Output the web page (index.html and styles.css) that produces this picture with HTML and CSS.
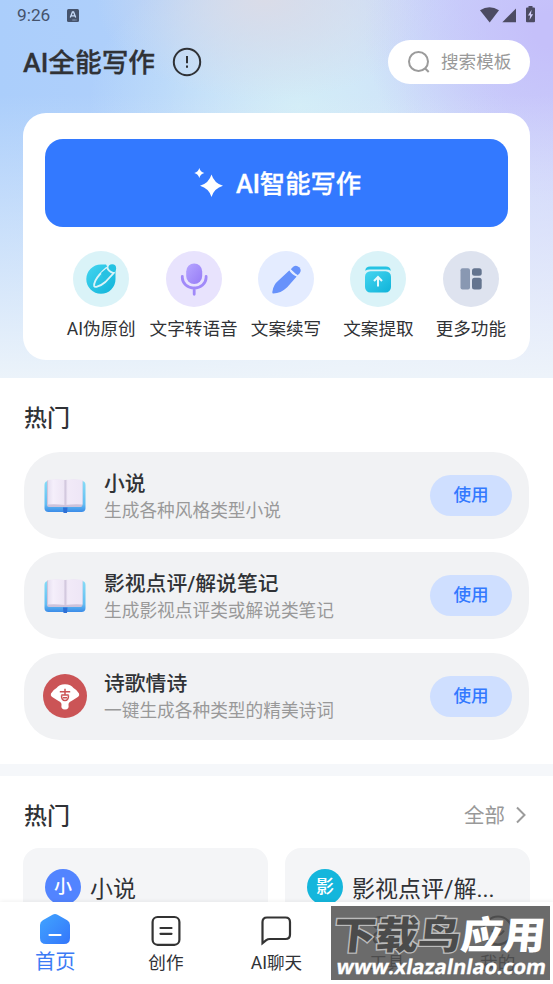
FILE: index.html
```html
<!DOCTYPE html>
<html lang="zh-CN">

<head>
  <meta charset="utf-8">
  <meta name="viewport" content="width=device-width, initial-scale=1">
  <title>AI全能写作</title>
  <link rel="stylesheet" href="styles.css">
</head>

<body>
  <div class="page">
    <div class="hero">
      <div class="status-bar">
        <span class="time">9:26</span>
        <svg class="status-app" width="12" height="13" viewBox="0 0 12 13">
          <rect width="12" height="13" rx="1.5" fill="#45536c"/>
          <path d="M3.3 8.6L5.4 3h1.2l2.1 5.6M4.2 6.8h3.6" fill="none" stroke="#c7dbf8" stroke-width="1.3"/>
          <path d="M5.5 11h4" stroke="#c7dbf8" stroke-width=".8" stroke-dasharray="1.2 .6"/>
        </svg>
        <svg class="status-icons" width="56" height="18" viewBox="0 0 56 18">
          <g fill="#4c4b62">
            <path d="M0 4.2Q9.5-1.8 19 4.2L9.7 16.4z"/>
            <path d="M36 2.5v13.7H22.3z"/>
            <path d="M48.500 1.500v-1.500h4v1.500h1.500q1 0 1 1v12.700q0 1-1 1h-7q-1 0-1-1v-12.700q0-1 1-1z"/>
          </g>
          <path d="M51.600 3.700l-3.600 5.800h2.200l-.7 4.600 3.600-5.900h-2.200z" fill="#d3cffa"/>
        </svg>
      </div>
      <div class="header">
        <h1>AI全能写作</h1>
        <svg class="tip" width="30" height="30" viewBox="0 0 30 30" fill="none" stroke="#303236" stroke-width="2">
          <circle cx="15" cy="15" r="13.200"/>
          <path d="M15 9v7.300M15 18.400v2.300"/>
        </svg>
        <div class="search">
          <svg width="24" height="24" viewBox="0 0 24 24" fill="none" stroke="#9b9b9b" stroke-width="2">
            <circle cx="11.500" cy="11.500" r="9.500"/>
            <path d="M18 18.300l3.700 3.700"/>
          </svg>
          <span>搜索模板</span>
        </div>
      </div>
      <div class="card">
        <div class="main-btn">
          <svg width="30" height="32" viewBox="0 0 30 32" fill="#fff">
            <path d="M5.300 1q1 4 5 5-4 1-5 5-1-4-5-5 4-1 5-5z"/>
            <path d="M17.500 7.500q2.600 8.700 11.500 11.300-8.900 2.600-11.500 11.200-2.600-8.600-11.500-11.200 8.900-2.600 11.500-11.300z"/>
          </svg>
          <span>AI智能写作</span>
        </div>
        <ul class="tools">
          <li>
            <div class="tool-icon cyan">
              <svg width="56" height="56" viewBox="0 0 56 56">
                <defs>
                  <linearGradient id="cyan" x1="0" y1="0" x2="1" y2="1">
                    <stop offset="0" stop-color="#45d5f0"/>
                    <stop offset="1" stop-color="#0fb3d9"/>
                  </linearGradient>
                </defs>
                <path d="M28 13.500h10.500q4 0 4 4V28a14.600 14.600 0 1 1-14.500-14.500z" fill="url(#cyan)"/>
                <path d="M43.500 13H33l2 5 4 3z" fill="#daf3f8"/>
                <path d="M34 16.400q-8.800 7.300-11.600 13.200-1.700 3.700-1.200 5.500.5 1.100 2.200.7 4.600-1 8.600-4.600l9.500-10.200" fill="none" stroke="#daf3f8" stroke-width="1.900"/>
                <path d="M34 17l5.500 5-7.500 8-4-8z" fill="#27c1e2"/>
                <circle cx="39.200" cy="17.200" r="3.900" fill="#24c2e2"/>
                <path d="M33.800 16.200q1.800 4.400 6.600 6" fill="none" stroke="#daf3f8" stroke-width="1.800"/>
              </svg>
            </div>
            <p>AI伪原创</p>
          </li>
          <li>
            <div class="tool-icon purple">
              <svg width="56" height="56" viewBox="0 0 56 56">
                <defs>
                  <linearGradient id="violet" x1="0" y1="0" x2="1" y2="1">
                    <stop offset="0" stop-color="#b6a5ff"/>
                    <stop offset="1" stop-color="#967cf6"/>
                  </linearGradient>
                </defs>
                <rect x="20.200" y="12.500" width="16" height="20.500" rx="8" fill="url(#violet)"/>
                <path d="M16.300 25.500v1a11.900 10.600 0 0 0 23.800 0v-1M28.200 37v6.300" fill="none" stroke="#a18af9" stroke-width="2.800" stroke-linecap="round"/>
              </svg>
            </div>
            <p>文字转语音</p>
          </li>
          <li>
            <div class="tool-icon blue">
              <svg width="56" height="56" viewBox="0 0 56 56">
                <path d="M31.500 19.200l7.200 6.200-9.500 10.900q-6.500 6.200-13.900 6.200-1.200 0-1-1.600.8-7 6.700-11.800z" fill="#6792fb"/>
                <path d="M32.800 18.200l2.400-2.400q2.900-2.500 6 .4 2.800 3 .4 6l-2.100 2.300z" fill="#6792fb"/>
                <path d="M32 18.600q2 4.400 7.500 6.300" fill="none" stroke="#e4ecff" stroke-width="1.700"/>
              </svg>
            </div>
            <p>文案续写</p>
          </li>
          <li>
            <div class="tool-icon cyan">
              <svg width="56" height="56" viewBox="0 0 56 56">
                <path d="M15.200 19.700q.5-4.200 5-4.200h15.600q4.500 0 5 4.200-2-1.200-4.500-1.200H19.700q-2.500 0-4.500 1.200z" fill="#25c3e3"/>
                <rect x="15" y="20.200" width="26" height="21.300" rx="5.500" fill="url(#cyan)"/>
                <path d="M28 35.500v-9M24 30l4-4 4 4" fill="none" stroke="#e5fafd" stroke-width="2"/>
              </svg>
            </div>
            <p>文案提取</p>
          </li>
          <li>
            <div class="tool-icon gray">
              <svg width="56" height="56" viewBox="0 0 56 56">
                <rect x="17.500" y="17.300" width="9.500" height="21.300" rx="2" fill="#8998b2"/>
                <rect x="29" y="17.300" width="9.700" height="7.500" rx="2.500" fill="#64748f"/>
                <rect x="29" y="26.800" width="9.700" height="11.800" rx="2.500" fill="#64748f"/>
              </svg>
            </div>
            <p>更多功能</p>
          </li>
        </ul>
      </div>
    </div>

    <div class="hot">
      <h2>热门</h2>
      <ul class="hot-list">
        <li>
          <svg class="hot-icon" width="44" height="44" viewBox="0 0 44 44">
            <defs>
              <linearGradient id="cover" x1="0" y1="0" x2="0" y2="1">
                <stop offset="0" stop-color="#86dbf6"/>
                <stop offset=".75" stop-color="#62bdf3"/>
                <stop offset="1" stop-color="#3c8ce8"/>
              </linearGradient>
              <linearGradient id="paper" x1="0" y1="0" x2="1" y2="0">
                <stop offset="0" stop-color="#e6dff0"/>
                <stop offset=".15" stop-color="#f5effb"/>
                <stop offset=".45" stop-color="#eee6f5"/>
                <stop offset=".5" stop-color="#d0c5dc"/>
                <stop offset=".57" stop-color="#f2eaf8"/>
                <stop offset="1" stop-color="#eee6f6"/>
              </linearGradient>
            </defs>
            <rect x="1.500" y="7" width="41" height="31" rx="4" fill="url(#cover)"/>
            <path d="M4 6.500q9-1.500 18 0 9-1.500 17.500 0V31q0 2-2 2H6q-2 0-2-2z" fill="#cdc3db"/>
            <path d="M5 6q9-1.500 17 0 9-1.500 17.500 0v24.500q-9-.5-17.500.5-8.500-1-17-.5z" fill="url(#paper)"/>
            <path d="M20 33.500h4.500l-.5 5.500h-3.500z" fill="#2f70d5"/>
          </svg>
          <div class="hot-text">
            <h3>小说</h3>
            <p>生成各种风格类型小说</p>
          </div>
          <span class="use">使用</span>
        </li>
        <li>
          <svg class="hot-icon" width="44" height="44" viewBox="0 0 44 44">
            <rect x="1.500" y="7" width="41" height="31" rx="4" fill="url(#cover)"/>
            <path d="M4 6.500q9-1.500 18 0 9-1.500 17.500 0V31q0 2-2 2H6q-2 0-2-2z" fill="#cdc3db"/>
            <path d="M5 6q9-1.500 17 0 9-1.500 17.500 0v24.500q-9-.5-17.500.5-8.500-1-17-.5z" fill="url(#paper)"/>
            <path d="M20 33.500h4.500l-.5 5.500h-3.500z" fill="#2f70d5"/>
          </svg>
          <div class="hot-text">
            <h3>影视点评/解说笔记</h3>
            <p>生成影视点评类或解说类笔记</p>
          </div>
          <span class="use">使用</span>
        </li>
        <li>
          <svg class="hot-icon" width="44" height="44" viewBox="0 0 44 44">
            <circle cx="22" cy="22" r="22" fill="#cb5456"/>
            <path d="M8 19.500q1.800-3.500 5.500-5.500 2.500-3.800 8.500-3.800T30.500 14q3.700 2 5.500 5.500.8 1.800-.8 3.200L28.500 27q-3.300 1.500-3 3.700.9 4.800-3.500 4.800t-3.500-4.800q.3-2.200-3-3.700l-6.700-4.300q-1.600-1.400-.8-3.200z" fill="#fff"/>
            <path d="M16.800 17.700h10.400M22 14.800v6M18.300 21h7.400M18.500 21.500q0 5 3.500 5t3.500-5M20 23.700h4" fill="none" stroke="#cb5456" stroke-width="1.500"/>
          </svg>
          <div class="hot-text">
            <h3>诗歌情诗</h3>
            <p>一键生成各种类型的精美诗词</p>
          </div>
          <span class="use">使用</span>
        </li>
      </ul>
    </div>

    <div class="more">
      <div class="more-head">
        <h2>热门</h2>
        <span class="all">全部</span>
        <svg width="12" height="18" viewBox="0 0 12 18" fill="none" stroke="#9b9b9b" stroke-width="2">
          <path d="M2 1.500L9.500 9 2 16.500"/>
        </svg>
      </div>
      <div class="more-list">
        <div class="more-item"><i class="avatar">小</i><span>小说</span></div>
        <div class="more-item"><i class="avatar teal">影</i><span>影视点评/解...</span></div>
      </div>
    </div>

    <ul class="tab-bar">
      <li class="active">
        <svg width="32" height="32" viewBox="0 0 32 32">
          <defs>
            <linearGradient id="home" x1="0" y1="0" x2="1" y2="1">
              <stop offset="0" stop-color="#41a5ff"/>
              <stop offset="1" stop-color="#3476fb"/>
            </linearGradient>
          </defs>
          <path d="M13.500.8q2.500-1.400 5 0l9.700 5.400q2.800 1.600 2.800 4.800v13q0 6-6 6H7q-6 0-6-6V11q0-3.200 2.800-4.800z" fill="url(#home)"/>
          <path d="M10.500 21h11" stroke="#fff" stroke-width="2.200" stroke-linecap="round"/>
        </svg>
        <span>首页</span>
      </li>
      <li>
        <svg width="32" height="32" viewBox="0 0 32 32" fill="none" stroke="#333" stroke-width="2.200">
          <rect x="2.600" y="3" width="26.800" height="27.800" rx="5"/>
          <path d="M10.500 14h11M10.500 19.800h11" stroke-linecap="round"/>
        </svg>
        <span>创作</span>
      </li>
      <li>
        <svg width="32" height="32" viewBox="0 0 32 32" fill="none" stroke="#333" stroke-width="2.200">
          <path d="M2.500 29.200V8q0-4.500 4.500-4.500h18.500q4.500 0 4.500 4.500v12.500q0 4.500-4.500 4.500H9.800q-2 0-3.500 1.200z"/>
        </svg>
        <span>AI聊天</span>
      </li>
      <li>
        <svg width="32" height="32" viewBox="0 0 32 32" fill="none" stroke="#333" stroke-width="2.200">
          <circle cx="8.500" cy="9" r="5.800"/>
          <circle cx="23.500" cy="9" r="5.800"/>
          <circle cx="8.500" cy="24" r="5.800"/>
          <circle cx="23.500" cy="24" r="5.800"/>
        </svg>
        <span>工具</span>
      </li>
      <li>
        <svg width="32" height="32" viewBox="0 0 32 32" fill="none" stroke="#333" stroke-width="2.200">
          <circle cx="16" cy="16.500" r="14"/>
          <path d="M10 16.500q6 9 12 0"/>
        </svg>
        <span>我的</span>
      </li>
    </ul>

    <div class="watermark">
      <div class="wm-name"><span>下载鸟</span>应用</div>
      <div class="wm-url">www.xlazalnlao.com</div>
    </div>
  </div>
</body>

</html>
```
FILE: styles.css
```css
* {
  margin: 0;
  padding: 0;
  box-sizing: border-box;
}

ul {
  list-style: none;
}

body {
  font-family: Roboto, "Noto Sans CJK SC", sans-serif;
  color: #303236;
  background-color: #fff;
}

svg {
  display: block;
  flex-shrink: 0;
}

h1,
h2,
h3 {
  font-weight: 500;
}

h1 {
  -webkit-text-stroke: .3px currentColor;
}

.page {
  position: relative;
  width: 553px;
  height: 984px;
  overflow: hidden;
}

.hero {
  height: 378px;
  padding: 0 23px;
  background:
    linear-gradient(to bottom, rgba(239, 245, 250, 0) 25%, rgba(239, 245, 250, .95) 100%),
    radial-gradient(ellipse 190px 170px at 100% 8%, #c5c0fa 10%, rgba(197, 192, 250, 0) 100%),
    radial-gradient(ellipse 170px 100px at 48% 0, #dadce8 0, rgba(218, 220, 232, 0) 100%),
    radial-gradient(ellipse 210px 160px at 54% 28%, #d3edf7 0, rgba(211, 237, 247, 0) 100%),
    linear-gradient(to right, #abcefb 0, #b0d0fb 30%, #cbddfa 62%, #ccd2fb 100%);
}

.status-bar {
  display: flex;
  align-items: center;
  height: 30px;
  margin: 0 -6px;
  color: #45536c;
}

.time {
  width: 50px;
  font-size: 17.300px;
}

.status-icons {
  margin: 0 0 1px auto;
}

.header {
  display: flex;
  align-items: center;
  height: 44px;
  margin-top: 10px;
}

.header h1 {
  padding-top: 2px;
  font-size: 26.700px;
  line-height: 44px;
}

.tip {
  margin-left: 17px;
}

.search {
  display: flex;
  align-items: center;
  width: 142px;
  height: 44px;
  margin-left: auto;
  padding-left: 19px;
  border-radius: 22px;
  background-color: #fff;
  font-size: 17.600px;
  color: #999;
}

.search span {
  margin-left: 10px;
  padding-bottom: 3px;
}

.card {
  height: 247.500px;
  margin-top: 28.500px;
  padding: 26px 22px 0;
  border-radius: 23px;
  background-color: #fff;
}

.main-btn {
  display: flex;
  align-items: center;
  justify-content: center;
  height: 88.500px;
  padding-left: 2px;
  border-radius: 18px;
  background-color: #3379ff;
  color: #fff;
  font-size: 25.300px;
  font-weight: 500;
  -webkit-text-stroke: .3px #fff;
}

.main-btn span {
  margin-left: 12px;
  padding-bottom: 2px;
}

.tools {
  display: flex;
  margin: 24px -9px 0 10px;
}

.tools li {
  flex: 1;
  text-align: center;
}

.tool-icon {
  width: 56px;
  height: 56px;
  margin: 0 auto;
  border-radius: 50%;
}

.tool-icon.cyan {
  background-color: #daf3f8;
}

.tool-icon.purple {
  background-color: #e8e3fd;
}

.tool-icon.blue {
  background-color: #e4ecff;
}

.tool-icon.gray {
  background-color: #dee3ef;
}

.tools p {
  margin-top: 9px;
  font-size: 17.600px;
  line-height: 26px;
  white-space: nowrap;
}

.hot {
  height: 386px;
  padding: 25px 24px 0;
}

h2 {
  font-size: 23px;
  line-height: 32px;
}

.hot-list {
  margin-top: 17px;
}

.hot-list li {
  display: flex;
  align-items: center;
  height: 87px;
  margin-bottom: 13.300px;
  padding: 0 17px 0 19px;
  border-radius: 36px;
  background-color: #f1f2f4;
}

.hot-text {
  flex: 1;
  margin-left: 17px;
  padding-top: 3px;
}

.hot-text h3 {
  font-size: 20.800px;
  line-height: 27px;
}

.hot-text p {
  font-size: 17.700px;
  line-height: 26px;
  color: #999;
}

.use {
  width: 82px;
  height: 41px;
  border-radius: 21px;
  background-color: #cfdfff;
  color: #3379ff;
  font-size: 17.600px;
  font-weight: 500;
  line-height: 41px;
  text-align: center;
}

.more {
  padding: 23px 23px 0;
  border-top: 12px solid #f5f7fa;
}

.more-head {
  display: flex;
  align-items: center;
  height: 32px;
  padding-right: 3px;
}

.more-head h2 {
  padding: 3px 0 0 1px;
}

.all {
  margin: 0 10px 0 auto;
  padding-bottom: 2px;
  font-size: 20.500px;
  color: #999;
}

.more-list {
  display: grid;
  grid-template-columns: repeat(2, minmax(0, 1fr));
  gap: 17px;
  margin-top: 17px;
}

.more-item {
  display: flex;
  align-items: center;
  height: 140px;
  padding: 0 22px 62px;
  border-radius: 16px;
  background-color: #f4f5f7;
  font-size: 23px;
}

.more-item span {
  margin-left: 9px;
  white-space: nowrap;
}

.avatar {
  width: 36px;
  height: 36px;
  border-radius: 50%;
  background-color: #5284ff;
  color: #fff;
  font-size: 18px;
  font-style: normal;
  font-weight: 500;
  line-height: 36px;
  text-align: center;
}

.avatar.teal {
  background-color: #14b6dc;
}

.tab-bar {
  position: absolute;
  left: 0;
  bottom: 0;
  display: flex;
  width: 100%;
  height: 82px;
  padding-top: 12px;
  background-color: #fff;
  box-shadow: 0 -1px 4px rgba(0, 0, 0, .06);
}

.tab-bar li {
  display: flex;
  flex: 1;
  flex-direction: column;
  align-items: center;
  font-size: 17.600px;
  line-height: 26px;
}

.tab-bar span {
  margin-top: 4px;
}

.tab-bar .active span {
  margin-top: 3px;
  font-size: 20.300px;
  color: #3c7bf5;
}

.watermark {
  position: absolute;
  left: 331px;
  top: 906px;
  width: 219px;
  height: 74px;
  background-color: rgba(81, 81, 81, .85);
  color: #fff;
  white-space: nowrap;
}

.wm-name {
  margin: 3px 0 0 3px;
  font-family: "Noto Sans CJK SC", sans-serif;
  font-size: 42.400px;
  font-weight: 900;
  line-height: 48px;
  transform: skewX(-6deg) scaleY(.9);
}

.wm-name span {
  color: #4b4b4b;
  -webkit-text-stroke: 3px #bbb;
  paint-order: stroke fill;
}

.wm-url {
  width: 207px;
  margin: -4px 0 0 6px;
  font-family: "Open Sans", sans-serif;
  font-size: 20.300px;
  font-weight: 700;
  line-height: 26px;
  -webkit-text-stroke: .3px #fff;
  transform: skewX(-10deg);
}
```
